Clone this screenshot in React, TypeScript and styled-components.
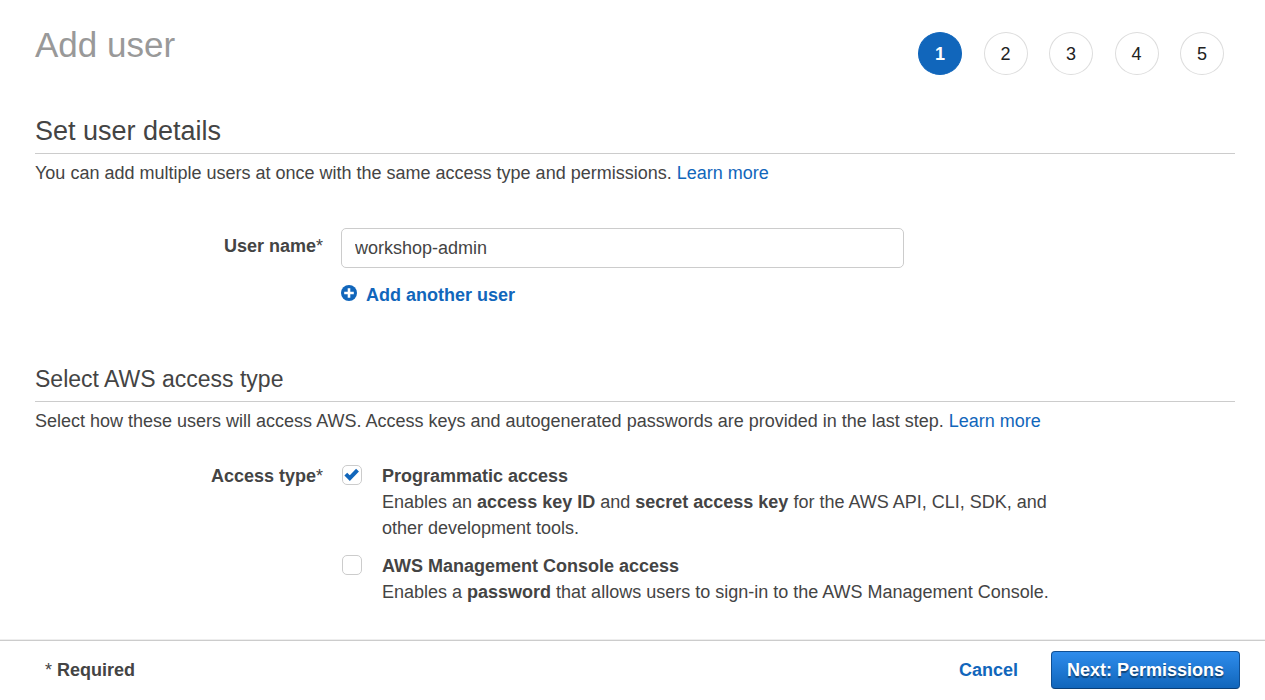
import React, { useState } from "react";
import styled, { createGlobalStyle } from "styled-components";

const GlobalStyle = createGlobalStyle`
  *, *::before, *::after { box-sizing: border-box; }
  body {
    margin: 0;
    background: #fff;
    color: #444;
    font-family: "Liberation Sans", Arial, Helvetica, sans-serif;
    font-size: 18px;
    line-height: 26px;
  }
`;

const Page = styled.div`
  display: flex;
  flex-direction: column;
  min-height: 100vh;
`;

const Content = styled.main`
  flex: 1;
  padding: 24px 30px 32px 35px;
`;

const Header = styled.header`
  display: flex;
  justify-content: space-between;
  align-items: flex-start;
  padding-right: 11px;
`;

const PageTitle = styled.h1`
  margin: 0;
  color: #999;
  font-size: 35px;
  font-weight: 400;
  line-height: 42px;
`;

const Steps = styled.ol`
  display: flex;
  justify-content: space-between;
  width: 306px;
  margin: 8px 0 0;
  padding: 0;
  list-style: none;
`;

const Step = styled.li<{ $current?: boolean }>`
  display: flex;
  align-items: center;
  justify-content: center;
  width: 44px;
  height: 43px;
  border: 1px solid ${(p) => (p.$current ? "#1166bb" : "#ddd")};
  border-radius: 50%;
  background: ${(p) => (p.$current ? "#1166bb" : "#fff")};
  color: ${(p) => (p.$current ? "#fff" : "#222")};
  font-weight: ${(p) => (p.$current ? 700 : 400)};
`;

const Section = styled.section<{ $gap: number }>`
  margin-top: ${(p) => p.$gap}px;
`;

const SectionTitle = styled.h2<{ $small?: boolean }>`
  margin: 0 0 6px;
  padding-bottom: 6px;
  border-bottom: 1px solid #ccc;
  font-size: ${(p) => (p.$small ? 23 : 27)}px;
  font-weight: 400;
  line-height: 32px;
`;

const Intro = styled.p`
  margin: 0;
`;

const Link = styled.a<{ $bold?: boolean }>`
  color: #1166bb;
  font-weight: ${(p) => (p.$bold ? 700 : 400)};
  text-decoration: none;
`;

const FormRow = styled.div<{ $gap: number }>`
  display: grid;
  grid-template-columns: 24% minmax(0, 1fr);
  column-gap: 18px;
  margin-top: ${(p) => p.$gap}px;
`;

const LabelCell = styled.div<{ $inset?: boolean }>`
  padding-top: ${(p) => (p.$inset ? 5 : 0)}px;
  font-weight: 700;
  text-align: right;
`;

const Star = styled.span`
  font-weight: 400;
`;

const NameInput = styled.input`
  display: block;
  width: 63%;
  height: 40px;
  padding: 0 13px;
  border: 1px solid #ccc;
  border-radius: 5px;
  background: #fff;
  color: #444;
  font: inherit;
`;

const AddButton = styled.button`
  display: flex;
  align-items: center;
  gap: 9px;
  margin-top: 14px;
  padding: 0;
  border: 0;
  background: none;
  color: #1166bb;
  font: inherit;
  font-weight: 700;
  cursor: pointer;

  svg { margin-bottom: 4px; }
`;

const Options = styled.div`
  display: grid;
  gap: 12px;
  max-width: 740px;
`;

const Option = styled.div`
  display: grid;
  grid-template-columns: 20px minmax(0, 1fr);
  column-gap: 20px;
  padding-left: 1px;
`;

const CheckFrame = styled.span`
  display: grid;
  width: 20px;
  height: 20px;
  margin-top: 2px;

  > * { grid-area: 1 / 1; }
  svg { pointer-events: none; z-index: 1; }
`;

const Checkbox = styled.input`
  appearance: none;
  width: 20px;
  height: 20px;
  margin: 0;
  border: 1px solid #ccc;
  border-radius: 5px;
  background: #fff;
`;

const OptionTitle = styled.label`
  display: block;
  font-weight: 700;
`;

const OptionText = styled.p`
  margin: 0;
`;

const Footer = styled.footer`
  display: flex;
  align-items: center;
  justify-content: space-between;
  height: 60px;
  padding: 0 25px 2px 45px;
  border-top: 1px solid #ccc;
  box-shadow: 0 -1px 0 #eee;
  background: #fff;
`;

const Actions = styled.div`
  display: flex;
  align-items: center;
  gap: 33px;
`;

const NextButton = styled.button`
  height: 38px;
  padding: 0 15px;
  border: 1px solid #0f4f94;
  border-bottom-color: #093f78;
  border-radius: 4px;
  background: linear-gradient(#2e8cec, #1166bb);
  color: #fff;
  font: inherit;
  font-weight: 700;
  text-shadow: 0 2px 1px #104477;
  cursor: pointer;
`;

function PlusIcon() {
  return (
    <svg width="16" height="16" viewBox="0 0 16 16" aria-hidden="true">
      <circle cx="8" cy="8" r="8" fill="#1166bb" />
      <path d="M8 3.2v9.6M3.2 8h9.6" stroke="#fff" strokeWidth="2.6" />
    </svg>
  );
}

function CheckIcon() {
  return (
    <svg width="20" height="20" viewBox="0 0 20 20" aria-hidden="true">
      <path d="M3.8 9.2l4 4 7.7-8" fill="none" stroke="#1166bb" strokeWidth="4" />
    </svg>
  );
}

type AccessOptionProps = {
  id: string;
  title: string;
  initial?: boolean;
  children: React.ReactNode;
};

function AccessOption({ id, title, initial = false, children }: AccessOptionProps) {
  const [checked, setChecked] = useState(initial);
  return (
    <Option>
      <CheckFrame>
        <Checkbox id={id} type="checkbox" checked={checked} onChange={(e) => setChecked(e.target.checked)} />
        {checked && <CheckIcon />}
      </CheckFrame>
      <div>
        <OptionTitle htmlFor={id}>{title}</OptionTitle>
        <OptionText>{children}</OptionText>
      </div>
    </Option>
  );
}

export default function App() {
  return (
    <Page>
      <GlobalStyle />
      <Content>
        <Header>
          <PageTitle>Add user</PageTitle>
          <Steps>
            {[1, 2, 3, 4, 5].map((n) => (
              <Step key={n} $current={n === 1} aria-current={n === 1 ? "step" : undefined}>
                {n}
              </Step>
            ))}
          </Steps>
        </Header>

        <Section $gap={40}>
          <SectionTitle>Set user details</SectionTitle>
          <Intro>
            You can add multiple users at once with the same access type and permissions.{" "}
            <Link href="#users">Learn more</Link>
          </Intro>
          <FormRow $gap={42}>
            <LabelCell $inset>
              <label htmlFor="user-name">User name<Star>*</Star></label>
            </LabelCell>
            <div>
              <NameInput id="user-name" type="text" defaultValue="workshop-admin" />
              <AddButton type="button">
                <PlusIcon />
                Add another user
              </AddButton>
            </div>
          </FormRow>
        </Section>

        <Section $gap={55}>
          <SectionTitle $small>Select AWS access type</SectionTitle>
          <Intro>
            Select how these users will access AWS. Access keys and autogenerated passwords are provided in the last
            step. <Link href="#access">Learn more</Link>
          </Intro>
          <FormRow $gap={29} role="group" aria-labelledby="access-type">
            <LabelCell id="access-type">Access type<Star>*</Star></LabelCell>
            <Options>
              <AccessOption id="programmatic" title="Programmatic access" initial>
                Enables an <b>access key ID</b> and <b>secret access key</b> for the AWS API, CLI, SDK, and other
                development tools.
              </AccessOption>
              <AccessOption id="console" title="AWS Management Console access">
                Enables a <b>password</b> that allows users to sign-in to the AWS Management Console.
              </AccessOption>
            </Options>
          </FormRow>
        </Section>
      </Content>

      <Footer>
        <b><Star>*</Star> Required</b>
        <Actions>
          <Link $bold href="#cancel">Cancel</Link>
          <NextButton type="button">Next: Permissions</NextButton>
        </Actions>
      </Footer>
    </Page>
  );
}
